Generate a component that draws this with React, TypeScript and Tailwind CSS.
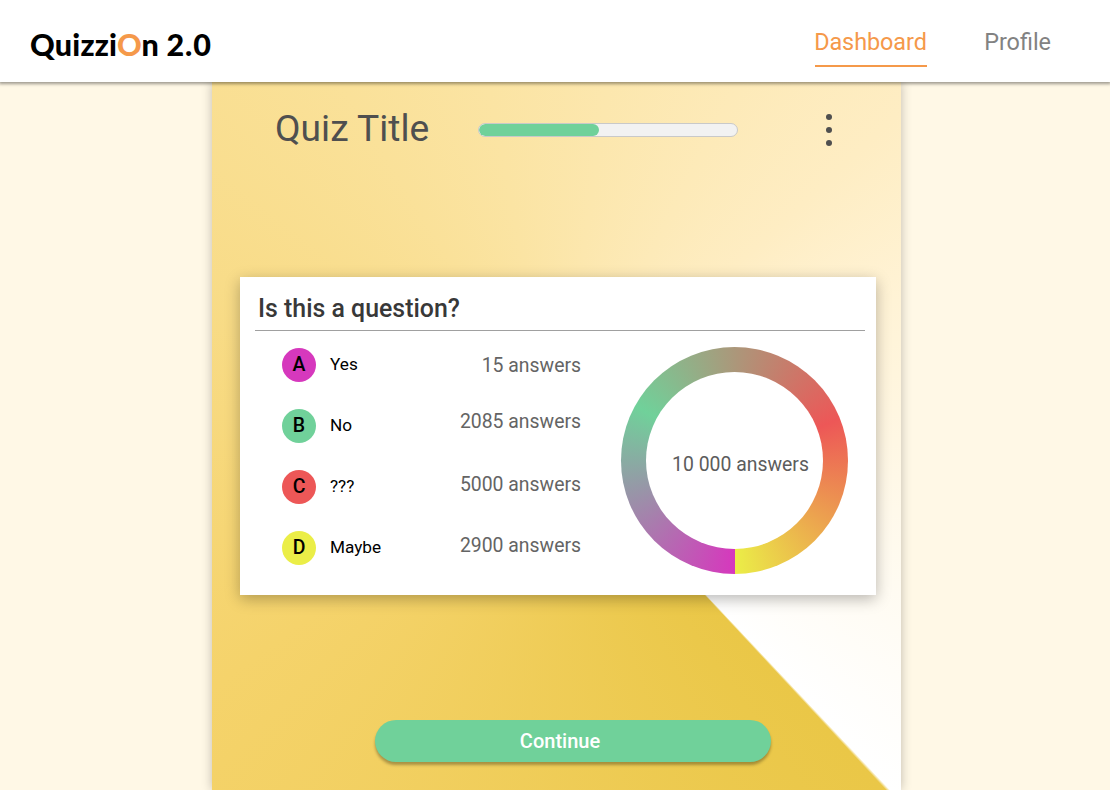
const answers = [
  { letter: "A", label: "Yes", count: "15 answers", color: "bg-[#d638bd]", shift: "pt-[2px]" },
  { letter: "B", label: "No", count: "2085 answers", color: "bg-[#70d19a]", shift: "pb-[9px]" },
  { letter: "C", label: "???", count: "5000 answers", color: "bg-[#ed5757]", shift: "pb-[6px]" },
  { letter: "D", label: "Maybe", count: "2900 answers", color: "bg-[#ebee47]", shift: "pb-[6px]" },
];

function Header() {
  return (
    <header className="relative z-10 flex h-[82px] shrink-0 items-start justify-between bg-white pl-[30px] pr-[59px] shadow-[0_1px_3px_1px_rgba(0,0,0,0.38)]">
      <div className="mt-[26px] whitespace-pre font-[Lato] text-[30.5px] leading-9 font-black tracking-[0.2px] text-black">
        Quizzi<span className="text-[#f5994a]">O</span>n <span className="tracking-[0.9px]">2.0</span>
      </div>
      <nav className="flex gap-[57px] pt-[28px] text-[23.4px] leading-7 text-[#828282]">
        <a className="h-[39px] w-[112px] border-b-2 border-[#f5994a] text-[#f5994a]">
          <span className="-ml-px tracking-[-0.05px]">Dashboard</span>
        </a>
        <a>Profile</a>
      </nav>
    </header>
  );
}

function Badge({ letter, color }: { letter: string; color: string }) {
  return (
    <span className={`flex size-[34px] items-center justify-center rounded-full text-[19.5px] leading-6 font-medium text-black ${color}`}>
      <span>{letter}</span>
    </span>
  );
}

function Donut() {
  return (
    <div className="mt-[16px] flex size-[227px] items-center justify-center rounded-full bg-[conic-gradient(from_180deg,#d638bd_0%,#70d19a_33%,#ed5757_69%,#ebee47_100%)]">
      <div className="flex size-[177px] items-center justify-center rounded-full bg-white pt-[8px] pl-3 text-[19.4px] whitespace-nowrap text-[#5c5c5c]">
        10 000 answers
      </div>
    </div>
  );
}

export default function App() {
  return (
    <div className="flex h-[790px] w-[1110px] flex-col overflow-hidden bg-[#fff8e6] font-[Roboto,sans-serif]">
      <Header />
      <main className="ml-[212px] flex w-[689px] flex-1 flex-col bg-[conic-gradient(from_136.7deg,#ffffff_0%,#eac747_0.1%,#f5d36b_27%,#fbe4a3_59%,#feedc3_75%,#fff3d6_81%,#ffffff_100%)] shadow-[0_0_10px_rgba(0,0,0,0.25)]">
        <div className="flex h-[195px] items-start pt-[26px] pl-[63px]">
          <h1 className="-mt-[2px] w-[203px] text-[37.2px] leading-[44px] text-[#4f4f4f]">Quiz Title</h1>
          <div className="mt-[15px] h-[14px] w-[260px] overflow-hidden rounded-full border border-[#c9c9c9] bg-[#f2f2f2]">
            <div className="h-full w-[120px] rounded-full bg-[#70d19a]" />
          </div>
          <button className="mt-[6px] ml-[87px] flex w-2 flex-col items-center gap-[7px]" aria-label="Menu">
            <span className="size-[6px] rounded-full bg-[#4f4f4f]" />
            <span className="size-[6px] rounded-full bg-[#4f4f4f]" />
            <span className="size-[6px] rounded-full bg-[#4f4f4f]" />
          </button>
        </div>
        <section className="ml-[28px] h-[318px] w-[636px] bg-white pr-[11px] pl-[15px] shadow-[0_4px_14px_rgba(0,0,0,0.28)]">
          <h2 className="flex h-[54px] items-center border-b border-[#a0a0a0] pt-[11px] pl-[3px] text-[24.9px] font-medium text-[#383838]">
            Is this a question?
          </h2>
          <div className="flex">
            <ul className="w-[366px] pt-[16.5px] pl-[27px]">
              {answers.map((a) => (
                <li key={a.letter} className="mb-[27.3px] flex h-[34px] items-center">
                  <Badge letter={a.letter} color={a.color} />
                  <span className="ml-[14px] text-[17.2px] text-black">{a.label}</span>
                  <span className={`mr-[40px] ml-auto text-[19.4px] text-[#646464] ${a.shift}`}>{a.count}</span>
                </li>
              ))}
            </ul>
            <Donut />
          </div>
        </section>
        <button className="mt-[125px] ml-[163px] flex h-[42px] w-[396px] items-center justify-center rounded-full bg-[#70d19a] pr-[26px] text-[20px] font-medium text-white shadow-[0_3px_3px_rgba(0,0,0,0.3)]">
          Continue
        </button>
      </main>
    </div>
  );
}
